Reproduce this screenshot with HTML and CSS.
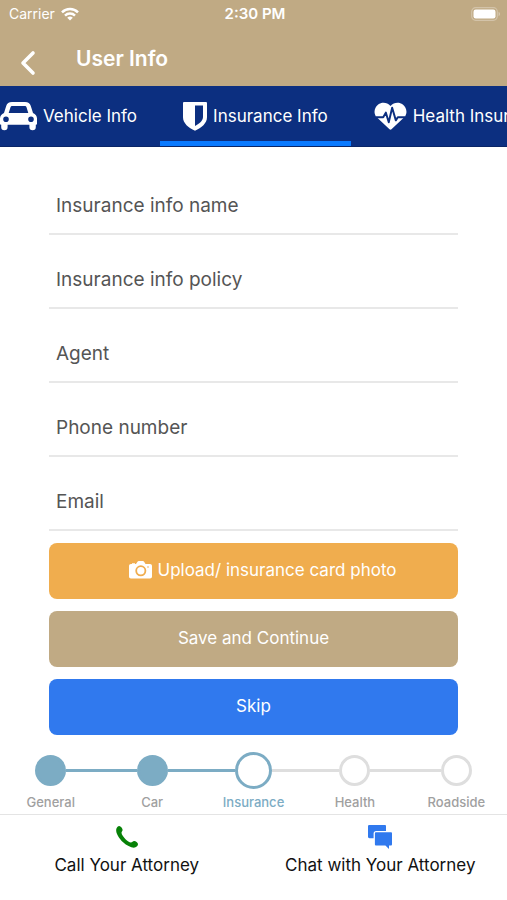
FILE: index.html
```html
<!DOCTYPE html>
<html lang="en">
<head>
<meta charset="utf-8">
<meta name="viewport" content="width=device-width, initial-scale=1">
<title>User Info</title>
<link rel="stylesheet" href="styles.css">
</head>
<body>
<div class="screen">
  <header class="top">
    <div class="status">
      <span class="carrier">Carrier
        <svg width="18" height="14" viewBox="0 0 18 14" aria-hidden="true"><g fill="none" stroke="#fff" stroke-width="2.5"><path d="M1 5.4a11.4 11.4 0 0 1 16 0"/><path d="M4 8.6a7.2 7.2 0 0 1 10 0"/></g><path d="M9 13.6 6.2 10.8a4 4 0 0 1 5.6 0z" fill="#fff"/></svg>
      </span>
      <span class="time">2:30 PM</span>
      <span class="battery"><svg width="30" height="14" viewBox="0 0 30 14" role="img" aria-label="Battery full"><rect x=".7" y=".7" width="25.6" height="12.6" rx="4" fill="none" stroke="#fff" stroke-opacity=".3" stroke-width="1.2"/><rect x="2.500" y="2.500" width="22" height="9" rx="2.200" fill="#fff"/><path d="M27.6 4.8c1.8.8 1.8 3.6 0 4.4z" fill="#fff" fill-opacity=".4"/></svg></span>
    </div>
    <div class="bar">
      <button class="back" type="button" aria-label="Back"><svg width="16" height="26" viewBox="0 0 16 26"><path d="M13 3 3 13l10 10" fill="none" stroke="#fff" stroke-width="3.600" stroke-linecap="round" stroke-linejoin="round"/></svg></button>
      <h1>User Info</h1>
    </div>
  </header>

  <nav class="tabs" aria-label="Sections">
    <a class="tab tab-first" href="#vehicle">
      <svg width="37" height="30" viewBox="0 0 37 30" aria-hidden="true"><path fill="#fff" fill-rule="evenodd" d="M12 1h13c3.200 0 5 1.500 5.800 4l2.200 7c2.500 1 4 3 4 5.500v5c0 .8-.5 1.300-1.200 1.300V26a3.200 3.200 0 0 1-6.400 0v-2.200H7.600V26a3.200 3.200 0 0 1-6.400 0v-2.200C.5 23.800 0 23.300 0 22.500v-5C0 15 1.500 13 4 12l2.200-7C7 2.500 8.800 1 12 1zM10.500 6.200 8.700 12h19.600l-1.800-5.800c-.2-.7-.7-1.100-1.500-1.100H12c-.8 0-1.300.4-1.500 1.100zM6 15.500a2.800 2.800 0 1 0 0 5.600 2.800 2.800 0 0 0 0-5.600zm25 0a2.800 2.800 0 1 0 0 5.600 2.800 2.800 0 0 0 0-5.600z"/></svg>
      <span>Vehicle Info</span>
    </a>
    <a class="tab tab-active" href="#insurance" aria-current="page">
      <svg width="24" height="30" viewBox="0 0 24 30" aria-hidden="true"><path fill="#fff" fill-rule="evenodd" d="M1.200 1h21.600c.7 0 1.200.5 1.200 1.200v14c0 6-5.500 10.500-12 13.500C5.500 26.700 0 22.200 0 16.200v-14C0 1.500.5 1 1.200 1zM12 4.500v20.600c4.700-2.600 8-5.300 8-9V4.500z"/></svg>
      <span>Insurance Info</span>
    </a>
    <a class="tab" href="#health">
      <svg width="33" height="30" viewBox="0 0 34 30" aria-hidden="true"><path fill="#fff" d="M17 4.600C13.500.6 8 .2 4.300 3.200.7 6-.8 11.200 2 15.500L16 28.700c.6.6 1.400.6 2 0L32 15.500c2.800-4.300 1.300-9.500-2.300-12.300C26 .2 20.500.6 17 4.600z"/><path d="M2 16.300h7.500l2.700-4.800 3 10 3.500-15 3.800 13 2-3.200H32" fill="none" stroke="#0c2f80" stroke-width="2" stroke-linejoin="round"/></svg>
      <span>Health Insurance</span>
    </a>
  </nav>

  <main>
    <form class="form">
      <input class="field" type="text" placeholder="Insurance info name" aria-label="Insurance info name">
      <input class="field" type="text" placeholder="Insurance info policy" aria-label="Insurance info policy">
      <input class="field" type="text" placeholder="Agent" aria-label="Agent">
      <input class="field" type="tel" placeholder="Phone number" aria-label="Phone number">
      <input class="field" type="email" placeholder="Email" aria-label="Email">
      <div class="row"><button class="btn btn-upload" type="button">
        <svg width="23" height="18" viewBox="0 0 23 18" aria-hidden="true"><path fill="#fff" d="M2 3h1v-.8h3V3h1l1.500-2.200C8.800.3 9.200 0 9.800 0h4c.6 0 1 .3 1.300.8L16.500 3H21c1.200 0 2 .8 2 2v10.500c0 1.200-.8 2-2 2H2c-1.200 0-2-.8-2-2V5c0-1.200.8-2 2-2z"/><circle cx="11.800" cy="9.800" r="4.600" fill="none" stroke="#f0ad4e" stroke-width="1.800"/><circle cx="19" cy="6" r=".8" fill="#f0ad4e"/></svg>
        <span>Upload/ insurance card photo</span></button></div>
      <div class="row"><button class="btn btn-save" type="submit">Save and Continue</button></div>
      <div class="row"><button class="btn btn-skip" type="button">Skip</button></div>
    </form>

    <ol class="steps">
      <li class="step done"><span class="track"><i class="dot"></i></span>General</li>
      <li class="step done"><span class="track"><i class="dot"></i></span>Car</li>
      <li class="step current" aria-current="step"><span class="track"><i class="dot"></i></span>Insurance</li>
      <li class="step"><span class="track"><i class="dot"></i></span>Health</li>
      <li class="step"><span class="track"><i class="dot"></i></span>Roadside</li>
    </ol>
  </main>

  <footer class="actions">
    <a class="action" href="#call">
      <svg width="24" height="24" viewBox="0 0 24 24" aria-hidden="true"><path fill="#078107" d="M1.200 4.500C1.400 2.800 3 1.200 4.300 1.100c1.300 0 3.100 2.300 3.300 3.700.2 1.200-1.100 1.900-1.100 3 0 1.600 2 4.400 4 6.400 2 1.900 4.200 3.500 5.700 3.300 1.200-.2 1.700-1.500 3-1.400 1.500.1 3.700 1.700 3.800 3 .1 1.500-1.600 3.200-3.200 3.500-3.200.5-8-1.900-11.700-5.300C4.300 13.800.7 8.400 1.200 4.500z"/></svg>
      <span>Call Your Attorney</span>
    </a>
    <a class="action" href="#chat">
      <svg width="24" height="24" viewBox="0 0 24 24" aria-hidden="true"><g fill="#3079ee"><path d="M1.500 0h15.300c.8 0 1.200.5 1.200 1.200V6H8.200C6.500 6 5.600 7 5.600 8.500v4.700H1.500C.6 13.200 0 12.700 0 11.800V1.400C0 .5.600 0 1.500 0z"/><path d="M8.200 7.300h14.600c.8 0 1.200.5 1.200 1.200v10.800c0 .8-.5 1.300-1.200 1.300H21V24l-3.600-3.400H8.200c-.8 0-1.300-.5-1.300-1.300V8.500c0-.7.5-1.200 1.300-1.200z"/></g></svg>
      <span>Chat with Your Attorney</span>
    </a>
  </footer>
</div>
</body>
</html>
```

FILE: styles.css
```css
* { box-sizing: border-box; }

body {
  margin: 0;
  background: #fff;
  color: #111;
  font-family: Inter, "Liberation Sans", sans-serif;
  font-size: 17px;
  line-height: 20px;
}

a { color: inherit; text-decoration: none; }
svg { display: block; flex: none; }

.screen {
  display: flex;
  flex-direction: column;
  min-height: 100vh;
}

.top { background: #c0aa84; color: #fff; }

.status {
  display: grid;
  grid-template-columns: 1fr auto 1fr;
  align-items: center;
  height: 28px;
  padding: 0 6px 0 9px;
  font-size: 14px;
}
.carrier { display: flex; align-items: center; gap: 6px; }
.time { font-size: 15px; font-weight: 600; }
.battery { justify-self: end; }

.bar {
  display: flex;
  align-items: center;
  gap: 40px;
  height: 58px;
  padding: 4px 20px 0;
}
.back {
  padding: 8px 0 0;
  border: 0;
  background: none;
}
h1 {
  margin: 0;
  font-size: 21px;
  font-weight: 600;
}

.tabs {
  display: flex;
  height: 61px;
  overflow: hidden;
  background: #0c2f80;
  border-bottom: 1px solid #0a2566;
  color: #fff;
}
.tab {
  display: flex;
  flex: none;
  align-items: center;
  gap: 6px;
  padding: 4px 23px 0;
  border-bottom: 5px solid transparent;
  white-space: nowrap;
}
.tab-first { padding-left: 0; }
.tab-active { border-bottom-color: #0a7aff; }

.form {
  display: flex;
  flex-direction: column;
  padding: 14px 49px 0;
}
.field {
  width: 100%;
  height: 74px;
  padding: 16px 7px 0;
  border: 0;
  border-bottom: 2px solid #e8e8e8;
  background: none;
  color: #555;
  font: inherit;
  font-size: 19px;
  outline: none;
}
.field::placeholder { color: #555; opacity: 1; }

.row { padding-top: 12px; }
.btn {
  display: flex;
  align-items: center;
  justify-content: center;
  gap: 6px;
  width: 100%;
  height: 56px;
  padding: 0 0 2px;
  border: 0;
  border-radius: 8px;
  color: #fff;
  font: inherit;
}
.btn-upload { padding-left: 18px; background: #f0ad4e; }
.btn-save { background: #c0aa84; }
.btn-skip { background: #3079ee; }

.steps {
  display: flex;
  margin: 0;
  padding: 15px 0 4px;
  list-style: none;
}
.step {
  flex: 1;
  color: #a0a0a0;
  font-size: 13px;
  font-weight: 500;
  line-height: 16px;
  text-align: center;
}
.track {
  display: flex;
  align-items: center;
  height: 40px;
  margin-bottom: 4px;
}
.track::before,
.track::after {
  flex: 1;
  height: 3px;
  background: #dedede;
  content: "";
}
.step:first-child .track::before,
.step:last-child .track::after { background: none; }
.dot {
  width: 31px;
  height: 31px;
  border: 3px solid #dedede;
  border-radius: 50%;
}
.done .dot { border-color: #7cacc4; background: #7cacc4; }
.done .track::before,
.done .track::after,
.current .track::before { background: #7cacc4; }
.current { color: #7cacc4; }
.current .dot {
  width: 37px;
  height: 37px;
  border-color: #7cacc4;
}

.actions {
  display: flex;
  flex: 1;
  border-top: 1px solid #e4e4e4;
}
.action {
  display: flex;
  flex: 1;
  flex-direction: column;
  align-items: center;
  gap: 6px;
  padding-top: 10px;
}
```
